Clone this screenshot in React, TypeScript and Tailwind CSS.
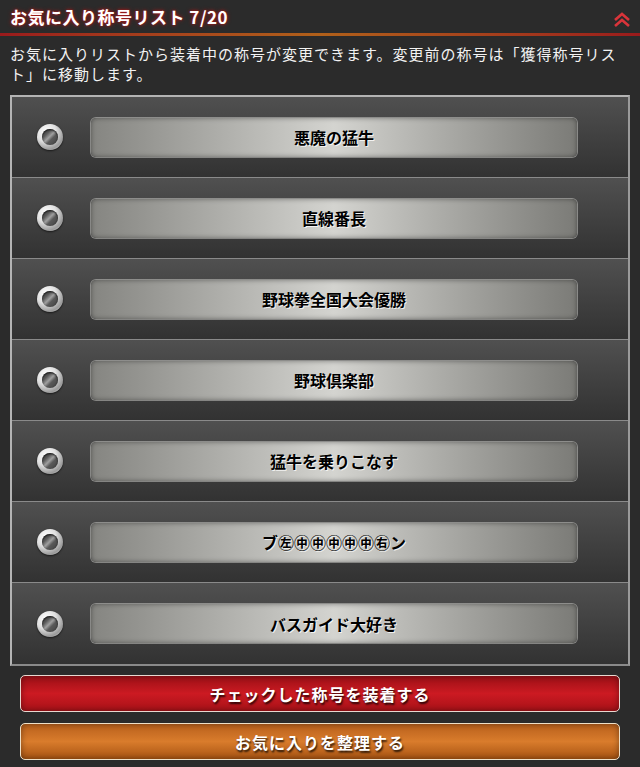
import React from 'react';

const titles = [
  '悪魔の猛牛',
  '直線番長',
  '野球拳全国大会優勝',
  '野球倶楽部',
  '猛牛を乗りこなす',
  'ブ㊧㊥㊥㊥㊥㊥㊨ン',
  'バスガイド大好き',
];

const font = { fontFamily: '"Noto Sans CJK JP", "Noto Sans", sans-serif' };

const RadioKnob: React.FC = () => (
  <div className="w-[26px] h-[26px] rounded-full bg-[radial-gradient(circle_at_35%_30%,#ffffff,#e0e0e0_40%,#9a9a9a_72%,#f0f0f0)] flex items-center justify-center shadow-[0_1px_2px_rgba(0,0,0,0.6)]">
    <div className="w-[16px] h-[16px] rounded-full bg-[linear-gradient(135deg,#3e3e3e_0%,#5a5a5a_30%,#a0a0a0_48%,#5a5a5a_62%,#3e3e3e_100%)] shadow-[inset_0_1px_2px_rgba(0,0,0,0.8)]" />
  </div>
);

const TitleRow: React.FC<{ label: string; last: boolean }> = ({ label, last }) => (
  <div
    className={`h-[81px] flex items-center bg-gradient-to-b from-[#505050] to-[#323232] ${
      last ? '' : 'border-b border-[#8a8a8a]'
    }`}
  >
    <div className="w-[75px] flex justify-center">
      <RadioKnob />
    </div>
    <div className="ml-[4px] w-[486px] h-[39px] rounded-[5px] bg-gradient-to-r from-[#858581] via-[#d4d4d0] to-[#7b7b77] shadow-[0_0_0_1px_rgba(210,210,205,0.5),inset_0_0_5px_rgba(0,0,0,0.4)] flex items-center justify-center">
      <span className="text-[16px] font-bold text-black [text-shadow:1px_1px_0_rgba(255,255,255,0.8)]">
        {label}
      </span>
    </div>
  </div>
);

export default function App() {
  return (
    <div className="w-[640px] h-[767px] bg-[#2b2b2b] text-white overflow-hidden" style={font}>
      {/* Header */}
      <div className="h-[33px] flex items-center justify-between pl-[10px] pr-[9px]">
        <h1 className="text-[17px] font-bold leading-none tracking-[0.5px] [text-shadow:0_0_4px_#b01818,0_0_2px_#b01818]">
          お気に入り称号リスト 7/20
        </h1>
        <svg width="18" height="18" viewBox="0 0 18 18" className="mt-[6px]">
          <path d="M2 9 L9 3 L16 9" fill="none" stroke="#d9343a" strokeWidth="2.6" />
          <path d="M2 15 L9 9 L16 15" fill="none" stroke="#d9343a" strokeWidth="2.6" />
        </svg>
      </div>
      <div className="h-[3px] bg-gradient-to-r from-[#9a1a1c] via-[#b0601a] to-[#9a1a1c]" />

      {/* Description */}
      <p className="pl-[10px] pr-[10px] pt-[8px] text-[15px] tracking-[1px] leading-[20px] text-[#f2f2f2]">
        お気に入りリストから装着中の称号が変更できます。変更前の称号は「獲得称号リスト」に移動します。
      </p>

      {/* List */}
      <div className="mx-[10px] mt-[11px] border-2 border-[#b4b4b4] border-r-[#9a9a9a] border-b-[#8a8a8a]">
        {titles.map((t, i) => (
          <TitleRow key={i} label={t} last={i === titles.length - 1} />
        ))}
      </div>

      {/* Actions */}
      <div className="px-[20px] pt-[9px] flex flex-col gap-[11px]">
        <button className="h-[37px] rounded-[5px] border border-[#e8d8d0] bg-gradient-to-b from-[#9b1016] via-[#cc1a22] to-[#a81218] text-white text-[16px] tracking-[1px] font-bold [text-shadow:1px_2px_2px_rgba(0,0,0,0.8)] shadow-[inset_0_0_6px_rgba(0,0,0,0.4)]">
          チェックした称号を装着する
        </button>
        <button className="h-[37px] rounded-[5px] border border-[#eee0c8] bg-gradient-to-b from-[#b8601c] via-[#d97c2c] to-[#a85412] text-white text-[16px] tracking-[1px] font-bold [text-shadow:1px_2px_2px_rgba(0,0,0,0.8)] shadow-[inset_0_0_6px_rgba(0,0,0,0.4)]">
          お気に入りを整理する
        </button>
      </div>
    </div>
  );
}
